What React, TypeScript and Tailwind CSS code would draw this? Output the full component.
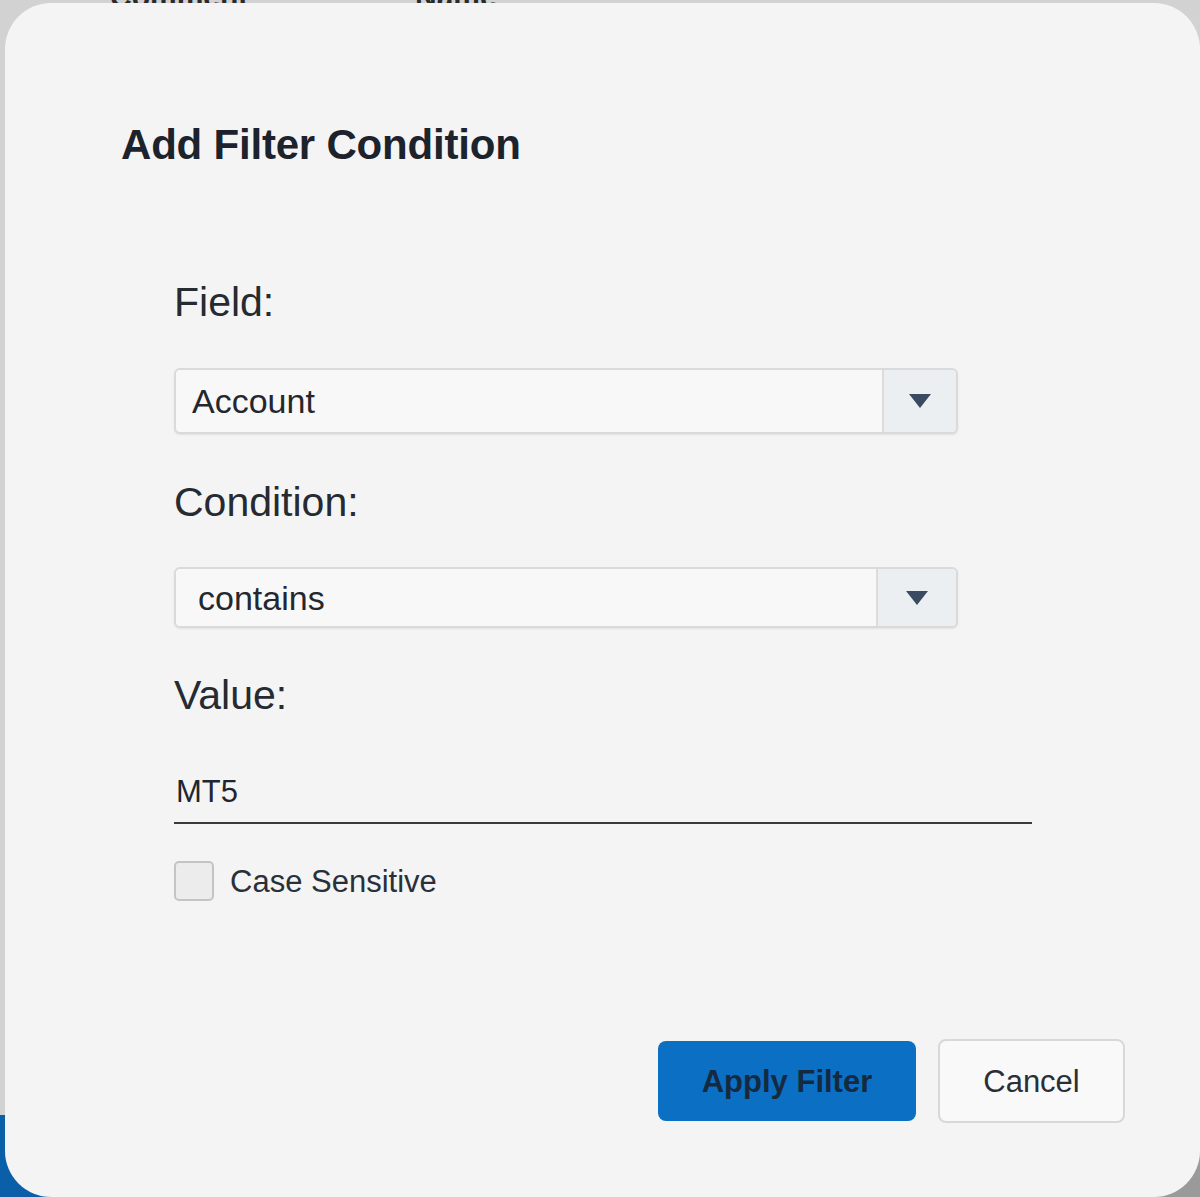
import { useState } from "react";

const font = { fontFamily: '"Liberation Sans", Arial, sans-serif' };

function Select({ value, padLeft, divider }: { value: string; padLeft: string; divider: string }) {
  return (
    <div className="flex h-full w-[784px] items-stretch overflow-hidden rounded-[6px] border-2 border-[#dadada] bg-[#f8f8f8] shadow-[0_1px_2px_rgba(0,0,0,0.08)]">
      <div className={`flex flex-1 items-center text-[34px] leading-none text-[#24282e] ${padLeft}`}>
        {value}
      </div>
      <div className={`flex items-center justify-center border-l-2 border-[#dcdcdc] bg-[#eceff2] ${divider}`}>
        <svg width="24" height="16" viewBox="0 0 24 16">
          <path d="M1 1 H23 L12 15 Z" fill="#3a4a60" />
        </svg>
      </div>
    </div>
  );
}

export default function App() {
  const [checked, setChecked] = useState(false);

  return (
    <div className="relative h-[1197px] w-[1200px] overflow-hidden bg-[#d2d2d2] pl-[5px] pt-[3px]" style={font}>
      {/* page behind the dialog: table header peeking out at the top, blue strip bottom-left */}
      <div className="absolute left-[110px] top-[-26px] text-[30px] font-bold text-[#2a2a2a]">Comment</div>
      <div className="absolute left-[415px] top-[-26px] text-[30px] font-bold text-[#2a2a2a]">Name</div>
      <div className="absolute bottom-0 left-0 h-[82px] w-[60px] bg-[#0b5fa8]" />
      <div className="absolute bottom-0 right-0 h-[60px] w-[60px] bg-[#9a9a9a]" />

      <div className="relative flex h-[1194px] w-[1195px] flex-col rounded-[46px] bg-[#f4f4f4] pl-[116px] pr-[75px] pt-[121px]">
        <h2 className="text-[42px] font-bold leading-none tracking-[-0.2px] text-[#1c232c]">
          Add Filter Condition
        </h2>

        <div className="mt-[116px] flex flex-col pl-[53px]">
          <label className="text-[41px] leading-none text-[#262a31]">Field:</label>
          <div className="mt-[45px] h-[66px]">
            <Select value="Account" padLeft="pl-[16px]" divider="w-[74px]" />
          </div>

          <label className="mt-[48px] text-[41px] leading-none text-[#262a31]">Condition:</label>
          <div className="mt-[44px] h-[61px]">
            <Select value="contains" padLeft="pl-[22px]" divider="w-[80px]" />
          </div>

          <label className="mt-[47px] text-[41px] leading-none text-[#262a31]">Value:</label>
          <div className="mt-[60px] w-[858px] border-b-2 border-[#3a3a3a] pb-[15px] pl-[2px] text-[31px] leading-none text-[#1e2630]">
            MT5
          </div>

          <button
            type="button"
            onClick={() => setChecked(!checked)}
            className="mt-[37px] flex items-center gap-[16px] self-start"
          >
            <span className="h-[40px] w-[40px] rounded-[5px] border-2 border-[#c4c4c4] bg-[#ececec]" />
            <span className="text-[31px] leading-none text-[#2a3038]">Case Sensitive</span>
          </button>
        </div>

        <div className="mt-[138px] flex items-center justify-end gap-[22px]">
          <button
            type="button"
            className="h-[80px] w-[258px] rounded-[8px] bg-[#0b6fc3] text-[31px] font-bold leading-none text-[#152a3f]"
          >
            Apply Filter
          </button>
          <button
            type="button"
            className="h-[84px] w-[187px] rounded-[8px] border-2 border-[#d8d8d8] bg-[#f9f9f9] text-[31px] leading-none text-[#2a2f36]"
          >
            Cancel
          </button>
        </div>
      </div>
    </div>
  );
}
